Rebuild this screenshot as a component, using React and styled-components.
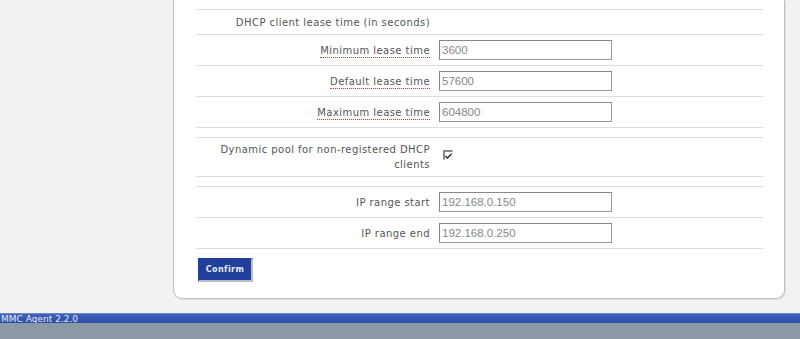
import React from 'react';
import styled, { createGlobalStyle } from 'styled-components';

const GlobalStyle = createGlobalStyle`
  html, body {
    margin: 0;
    padding: 0;
    background: #f2f2f2;
    font-family: "DejaVu Sans", Verdana, sans-serif;
  }
`;

const leaseRows = [
  ['Minimum lease time', '3600'],
  ['Default lease time', '57600'],
  ['Maximum lease time', '604800'],
];

const rangeRows = [
  ['IP range start', '192.168.0.150'],
  ['IP range end', '192.168.0.250'],
];

const App = () => {
  return (
    <Page>
      <GlobalStyle />
      <Main>
        <Panel>
          <Table>
            <Row $height={24}>
              <LabelCell>DHCP client lease time (in seconds)</LabelCell>
              <FieldCell />
            </Row>
            {leaseRows.map(([label, value]) => (
              <Row key={label}>
                <LabelCell><Abbr>{label}</Abbr></LabelCell>
                <FieldCell><TextInput defaultValue={value} /></FieldCell>
              </Row>
            ))}
          </Table>

          <Table>
            <Row $height={38}>
              <LabelCell>Dynamic pool for non-registered DHCP clients</LabelCell>
              <FieldCell>
                <CheckBox>
                  <svg width="7" height="6" viewBox="0 0 7 6">
                    <path d="M0.5 3 L2.5 5 L6.5 0.8" stroke="#222" strokeWidth="1.3" fill="none" />
                  </svg>
                </CheckBox>
              </FieldCell>
            </Row>
          </Table>

          <Table>
            {rangeRows.map(([label, value]) => (
              <Row key={label}>
                <LabelCell>{label}</LabelCell>
                <FieldCell><TextInput defaultValue={value} /></FieldCell>
              </Row>
            ))}
          </Table>

          <ConfirmButton>Confirm</ConfirmButton>
        </Panel>
      </Main>
      <Footer>
        <VersionBar>MMC Agent <u>2.2.0</u></VersionBar>
        <BottomBar />
      </Footer>
    </Page>
  );
};

export default App;

// Styled Components

const Page = styled.div`
  width: 800px;
  height: 339px;
  display: flex;
  flex-direction: column;
  overflow: hidden;
`;

const Main = styled.div`
  flex: 1;
  padding: 0 15px 0 173px;
`;

const Panel = styled.div`
  background: #fff;
  border: 1px solid #bdbdbd;
  border-top: none;
  border-radius: 0 0 9px 9px;
  box-shadow: 1px 1px 0 #e2e2e2;
  padding: 9px 21px 16px 22px;
`;

const Table = styled.div`
  border-top: 1px solid #dcdcdc;
  margin-bottom: 9px;
`;

const Row = styled.div`
  display: flex;
  align-items: center;
  height: ${({ $height }) => $height || 30}px;
  border-bottom: 1px solid #dcdcdc;
`;

const LabelCell = styled.div`
  width: 218px;
  padding: 0 9px 0 16px;
  text-align: right;
  font-size: 10px;
  letter-spacing: 0.45px;
  line-height: 15px;
  color: #555;
`;

const FieldCell = styled.div`
  flex: 1;
  display: flex;
  align-items: center;
`;

const Abbr = styled.span`
  border-bottom: 1px dotted #e03a2a;
  padding-bottom: 1px;
`;

const TextInput = styled.input`
  box-sizing: border-box;
  width: 173px;
  height: 20px;
  margin: 0;
  padding: 1px 2px;
  border: 1px solid #999;
  border-top-color: #888;
  border-left-color: #888;
  font-family: "Liberation Sans", Arial, sans-serif;
  font-size: 11.5px;
  color: #888;
  background: #fff;
  outline: none;
`;

const CheckBox = styled.span`
  box-sizing: border-box;
  display: inline-flex;
  align-items: center;
  justify-content: center;
  width: 10px;
  height: 10px;
  margin: 0 0 4px 4px;
  border-top: 2px solid #888;
  border-left: 2px solid #888;
  border-right: 1px solid #eee;
  border-bottom: 1px solid #eee;
  background: #fff;
`;

const ConfirmButton = styled.button`
  display: block;
  margin: 5px 0 0 2px;
  width: 55px;
  height: 24px;
  padding: 0;
  background: #21409b;
  border: 1px solid #21409b;
  border-right: 2px solid #b8bcc6;
  border-bottom: 2px solid #b8bcc6;
  color: #e8ecf6;
  font-family: "DejaVu Sans", Verdana, sans-serif;
  font-size: 8px;
  font-weight: bold;
  letter-spacing: 0.4px;
`;

const Footer = styled.div`
  display: flex;
  flex-direction: column;
`;

const VersionBar = styled.div`
  height: 9px;
  border-top: 1px solid #6d88cc;
  background: linear-gradient(#3f62bd, #2a4ba6);
  color: #e6ebf7;
  font-size: 9px;
  line-height: 10px;
  padding-left: 1px;
  white-space: nowrap;
  overflow: hidden;
`;

const BottomBar = styled.div`
  height: 16px;
  background: #8c98a4;
`;
